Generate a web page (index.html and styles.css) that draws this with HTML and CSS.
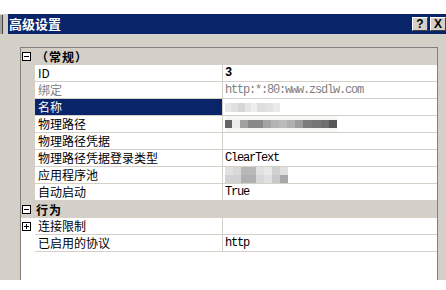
FILE: index.html
```html
<!DOCTYPE html>
<html lang="zh-CN">
<head>
  <meta charset="UTF-8">
  <title>高级设置</title>
  <link rel="stylesheet" href="styles.css">
</head>
<body>

  <div class="top-strip"></div>

  <div class="dialog">
    <div class="title-row">
      <div class="edge-btn"></div>
      <div class="titlebar">
        <span class="title">高级设置</span>
        <div class="title-buttons">
          <span class="tbtn">?</span>
          <span class="tbtn">X</span>
        </div>
      </div>
    </div>

    <div class="content">
      <div class="grid">
        <div class="row category">
          <div class="margin">
            <svg class="toggle" width="9" height="9" viewBox="0 0 9 9"><rect x="0.5" y="0.5" width="8" height="8" fill="#fff" stroke="#000"/><path d="M2 4.5h5" stroke="#000"/></svg>
          </div>
          <div class="cat-name">（常规）</div>
        </div>
        <div class="row">
          <div class="margin"></div>
          <div class="name">ID</div>
          <div class="value bold">3</div>
        </div>
        <div class="row readonly">
          <div class="margin"></div>
          <div class="name">绑定</div>
          <div class="value">http:*:80:www.zsdlw.com</div>
        </div>
        <div class="row selected">
          <div class="margin"></div>
          <div class="name">名称</div>
          <div class="value"><span class="blur blur-name"></span></div>
        </div>
        <div class="row">
          <div class="margin"></div>
          <div class="name">物理路径</div>
          <div class="value"><span class="blur blur-path"></span></div>
        </div>
        <div class="row">
          <div class="margin"></div>
          <div class="name">物理路径凭据</div>
          <div class="value"></div>
        </div>
        <div class="row">
          <div class="margin"></div>
          <div class="name">物理路径凭据登录类型</div>
          <div class="value">ClearText</div>
        </div>
        <div class="row">
          <div class="margin"></div>
          <div class="name">应用程序池</div>
          <div class="value"><span class="blur blur-pool"></span></div>
        </div>
        <div class="row">
          <div class="margin"></div>
          <div class="name">自动启动</div>
          <div class="value">True</div>
        </div>
        <div class="row category">
          <div class="margin">
            <svg class="toggle" width="9" height="9" viewBox="0 0 9 9"><rect x="0.5" y="0.5" width="8" height="8" fill="#fff" stroke="#000"/><path d="M2 4.5h5" stroke="#000"/></svg>
          </div>
          <div class="cat-name">行为</div>
        </div>
        <div class="row open">
          <div class="margin">
            <svg class="toggle" width="9" height="9" viewBox="0 0 9 9"><rect x="0.5" y="0.5" width="8" height="8" fill="#fff" stroke="#000"/><path d="M2 4.5h5M4.5 2v5" stroke="#000"/></svg>
          </div>
          <div class="name">连接限制</div>
          <div class="value"></div>
        </div>
        <div class="row open">
          <div class="margin"></div>
          <div class="name">已启用的协议</div>
          <div class="value">http</div>
        </div>
      </div>
    </div>
  </div>

</body>
</html>
```

FILE: styles.css
```css
* {
  margin: 0;
  padding: 0;
  box-sizing: border-box;
}

body {
  width: 446px;
  height: 290px;
  overflow: hidden;
  background-color: #ffffff;
  font-family: "Noto Sans CJK SC", "Liberation Sans", sans-serif;
  font-size: 12px;
  color: #000000;
}

.top-strip {
  height: 14px;
  background-color: #ffffff;
}

.dialog {
  height: 266px;
  background-color: #d4d0c8;
  display: flex;
  flex-direction: column;
}

.title-row {
  display: flex;
  align-items: flex-start;
  gap: 5px;
  height: 20px;
}

.edge-btn {
  width: 3px;
  height: 19px;
  margin-top: 1px;
  background-color: #a8a6a0;
  border-right: 1px solid #404040;
}

.titlebar {
  flex: 1;
  height: 20px;
  background-color: #0a246a;
  display: flex;
  align-items: center;
  justify-content: space-between;
  padding-left: 1px;
}

.title {
  color: #ffffff;
  font-weight: bold;
  font-size: 13px;
  line-height: 20px;
}

.title-buttons {
  display: flex;
  gap: 2px;
}

.tbtn {
  width: 16px;
  height: 14px;
  background-color: #d4d0c8;
  border-top: 1px solid #ffffff;
  border-left: 1px solid #ffffff;
  border-right: 1px solid #404040;
  border-bottom: 1px solid #404040;
  font-family: "Liberation Sans", sans-serif;
  font-weight: bold;
  font-size: 12px;
  line-height: 12px;
  text-align: center;
}

.content {
  flex: 1;
  padding: 13px 8px 0 20px;
}

.grid {
  height: 100%;
  background-color: #ffffff;
  border: 1px solid #808080;
  border-bottom: none;
}

.row {
  display: flex;
  height: 17px;
}

.margin {
  width: 14px;
  flex-shrink: 0;
  background-color: #d4d0c8;
  display: flex;
  align-items: center;
  padding-left: 1px;
}

.row.open .margin {
  background-color: #ffffff;
}

.toggle {
  display: block;
}

.name {
  width: 188px;
  flex-shrink: 0;
  padding-left: 3px;
  line-height: 16px;
  border-right: 1px solid #d4d0c8;
  border-bottom: 1px solid #d4d0c8;
  white-space: nowrap;
}

.value {
  flex: 1;
  padding-left: 2px;
  line-height: 16px;
  border-bottom: 1px solid #d4d0c8;
  font-family: "Liberation Mono", monospace;
  letter-spacing: -1.2px;
  white-space: nowrap;
}

.value.bold {
  font-weight: bold;
}

.category {
  background-color: #d4d0c8;
}

.cat-name {
  padding-left: 1px;
  font-weight: bold;
  line-height: 17px;
  letter-spacing: 1px;
}

.readonly .name,
.readonly .value {
  color: #808080;
}

.selected .name {
  background-color: #0a246a;
  color: #ffffff;
}

.blur {
  display: inline-block;
  vertical-align: top;
}

.blur-name {
  width: 55px;
  height: 9px;
  margin-top: 4px;
  background: linear-gradient(90deg, #e8e8e8 0 6px, #e0e0e0 6px 13px, #d6d6d6 13px 20px, #e4e4e4 20px 26px, #eeeeee 26px 32px, #dedede 32px 40px, #e2e2e2 40px 48px, #eaeaea 48px 55px);
}

.blur-path {
  width: 112px;
  height: 8px;
  margin-top: 4px;
  background: linear-gradient(90deg, #646464 0 7px, #ececec 7px 15px, #a0a0a0 15px 23px, #888888 23px 38px, #a4a4a4 38px 46px, #b4b4b4 46px 54px, #bababa 54px 62px, #b0b0b0 62px 70px, #9c9c9c 70px 78px, #7c7c7c 78px 87px, #767676 87px 96px, #6e6e6e 96px 104px, #565656 104px 112px);
  box-shadow: 0 -4px 0 #f6f6f4, 0 4px 0 #f6f6f4;
}

.blur-pool {
  width: 63px;
  height: 16px;
  background:
    linear-gradient(90deg, #e0e0e0 0 8px, #d8d8d8 8px 16px, #b8b8b8 16px 31px, #e2e2e2 31px 39px, #e8e8e8 39px 47px, #d0d0d0 47px 55px, #e0e0e0 55px 63px) top / 100% 8px no-repeat,
    linear-gradient(90deg, #d2d2d2 0 16px, #b0b0b0 16px 31px, #d8d8d8 31px 39px, #e0e0e0 39px 47px, #c8c8c8 47px 55px, #a8a8a8 55px 63px) bottom / 100% 8px no-repeat;
}
```
